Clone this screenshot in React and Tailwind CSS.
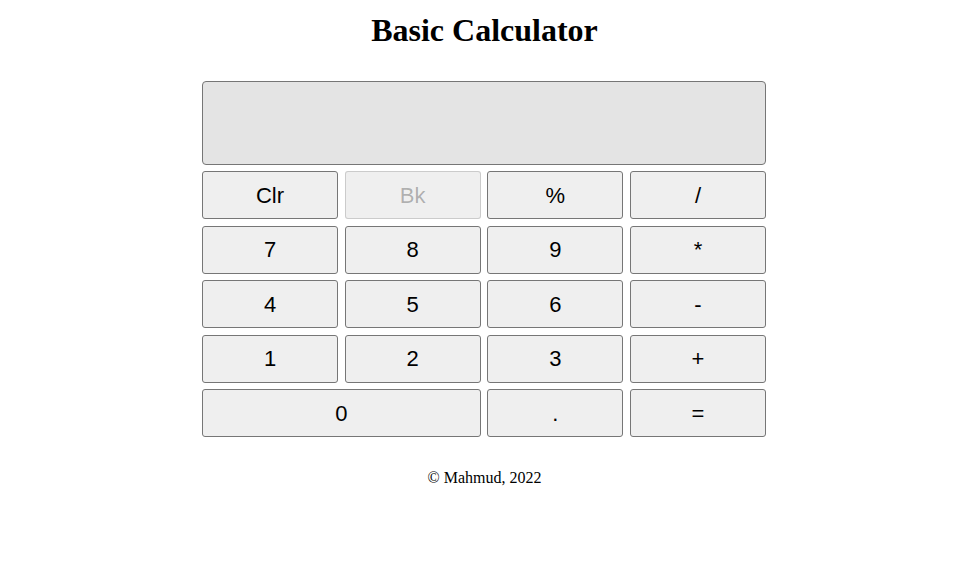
import { useState } from "react";

const keys = [
  { label: "Clr" },
  { label: "Bk", disabled: true },
  { label: "%" },
  { label: "/" },
  { label: "7" },
  { label: "8" },
  { label: "9" },
  { label: "*" },
  { label: "4" },
  { label: "5" },
  { label: "6" },
  { label: "-" },
  { label: "1" },
  { label: "2" },
  { label: "3" },
  { label: "+" },
  { label: "0", wide: true },
  { label: "." },
  { label: "=" },
];

const App = () => {
  const [value, setValue] = useState("");

  const press = (k) => {
    if (k === "Clr") return setValue("");
    if (k === "Bk") return setValue(value.slice(0, -1));
    if (k === "=") {
      try {
        // eslint-disable-next-line no-eval
        setValue(String(eval(value)));
      } catch (e) {
        setValue("Error");
      }
      return;
    }
    setValue(value + k);
  };

  return (
    <div className="flex flex-col items-center w-full min-h-screen bg-white text-black">
      <h1
        className="mt-[12px] mb-[32px] text-[32px] leading-[37px] font-bold"
        style={{ fontFamily: '"Liberation Serif", "Times New Roman", serif' }}
      >
        Basic Calculator
      </h1>

      <div className="w-[564px] mr-[1px] flex flex-col gap-[6px]">
        <div className="w-full h-[84px] bg-[#e4e4e4] border border-[#767676] rounded-[4px] px-3 flex items-center justify-end text-[28px] font-['Liberation_Sans',Arial,sans-serif]">
          {value}
        </div>

        <div className="grid grid-cols-4 gap-x-[6.67px] gap-y-[6.5px]">
          {keys.map((k) => (
            <button
              key={k.label}
              disabled={k.disabled && value === ""}
              onClick={() => press(k.label)}
              className={`h-[48px] rounded-[3px] border bg-[#efefef] text-[22px] font-['Liberation_Sans',Arial,sans-serif] ${
                k.wide ? "col-span-2" : ""
              } ${
                k.disabled && value === ""
                  ? "border-[#767676]/30 text-[#101010]/30"
                  : "border-[#767676] text-black"
              }`}
            >
              {k.label}
            </button>
          ))}
        </div>
      </div>

      <p
        className="mt-[32px] text-[16px] leading-[18px]"
        style={{ fontFamily: '"Liberation Serif", "Times New Roman", serif' }}
      >
        © Mahmud, 2022
      </p>
    </div>
  );
};

export default App;
